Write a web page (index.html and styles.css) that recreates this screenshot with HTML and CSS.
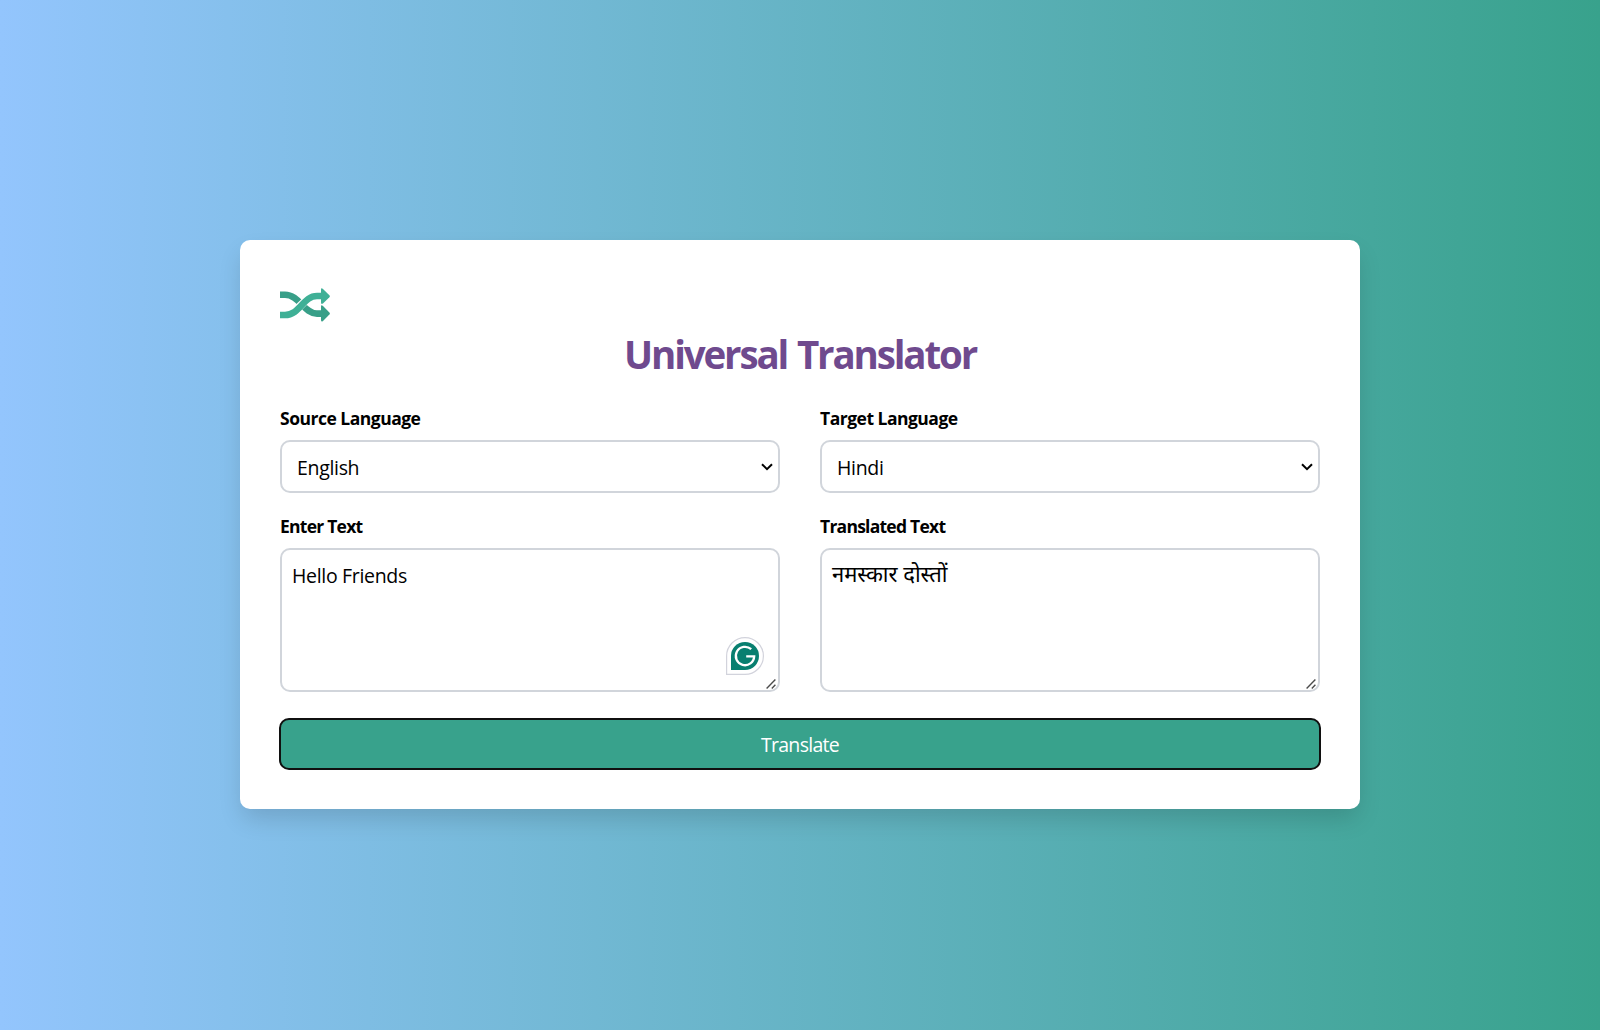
FILE: index.html
```html
<!DOCTYPE html>
<html lang="en">
<head>
<meta charset="utf-8">
<title>Universal Translator</title>
<link rel="stylesheet" href="styles.css">
</head>
<body>
<main class="card">
  <svg class="logo" viewBox="0 0 50 34" aria-hidden="true">
    <path class="strand-back" d="M0 6.8H5C19 6.8 24 25.6 37 25.6H42"/>
    <path class="head-back" d="M41 18.5Q41 16.5 43 18L49.4 24.6Q50.3 25.6 49.4 26.6L43 33Q41 34.4 41 32.1Z"/>
    <path class="strand-gap" d="M13 24.5C20 20 24 11.5 32 9"/>
    <path class="strand-front" d="M0 27H5C20 27 23 8 37 8H42"/>
    <path class="head-front" d="M41 1.5Q41-.5 43 .9L49.4 7.3Q50.3 8.3 49.4 9.3L43 15.5Q41 16.8 41 14.5Z"/>
  </svg>
  <h1 class="title">Universal Translator</h1>
  <form class="form">
    <div class="field">
      <label class="label" for="source">Source Language</label>
      <div class="control">
        <select class="select" id="source"><option>English</option></select>
        <svg class="chevron" viewBox="0 0 12 8" aria-hidden="true"><path d="M1 1.2 6 6.2 11 1.2"/></svg>
      </div>
    </div>
    <div class="field">
      <label class="label" for="target">Target Language</label>
      <div class="control">
        <select class="select" id="target"><option>Hindi</option></select>
        <svg class="chevron" viewBox="0 0 12 8" aria-hidden="true"><path d="M1 1.2 6 6.2 11 1.2"/></svg>
      </div>
    </div>
    <div class="field">
      <label class="label label-text" for="input">Enter Text</label>
      <div class="control">
        <textarea class="textarea" id="input" spellcheck="false">Hello Friends</textarea>
        <svg class="assistant" viewBox="0 0 38 38" aria-hidden="true">
          <path class="assistant-frame" d="M.6 37.4V19A18.4 18.4 0 1 1 19 37.4Z"/>
          <path class="assistant-fill" d="M5 33V19A14 14 0 1 1 19 33Z"/>
          <path class="assistant-mark" d="M25.2 12.2A9.2 9.2 0 1 0 28.2 19.3H20.2"/>
        </svg>
        <svg class="grip" viewBox="0 0 10 10" aria-hidden="true"><path d="M.6 9.4 9.4.6M5.8 9.4 9.4 5.8"/></svg>
      </div>
    </div>
    <div class="field">
      <label class="label label-text" for="output">Translated Text</label>
      <div class="control">
        <textarea class="textarea textarea-hindi" id="output" spellcheck="false" lang="hi">नमस्कार दोस्तों</textarea>
        <svg class="grip" viewBox="0 0 10 10" aria-hidden="true"><path d="M.6 9.4 9.4.6M5.8 9.4 9.4 5.8"/></svg>
      </div>
    </div>
    <button class="button" type="button">Translate</button>
  </form>
</main>
</body>
</html>
```
FILE: styles.css
```css
* {
  box-sizing: border-box;
}

body {
  margin: 0;
  min-height: 100vh;
  padding-top: 240px;
  background: linear-gradient(to right, #93c5fd, #38a28c);
  font-family: "Open Sans", "Noto Sans", sans-serif;
  color: #000;
}

.card {
  width: 1120px;
  height: 569px;
  margin: 0 auto;
  padding: 48px 40px 40px;
  border-radius: 10px;
  background: #fff;
  box-shadow: 0 12px 24px -3px rgba(0, 0, 0, .15);
}

.logo {
  display: block;
  width: 50px;
  height: 34px;
}

.strand-back,
.strand-front,
.strand-gap {
  fill: none;
  stroke-width: 6.6;
}

.strand-back { stroke: #389f88; }
.strand-front { stroke: #3fb096; }
.strand-gap { stroke: #fff; stroke-width: 8; }
.head-back { fill: #389f88; }
.head-front { fill: #3fb096; }

.title {
  margin: 7px 0 0;
  font-size: 38.5px;
  line-height: 50px;
  font-weight: 700;
  letter-spacing: -2.15px;
  word-spacing: 2px;
  text-align: center;
  color: #6f4a8e;
}

.form {
  display: grid;
  grid-template-columns: 1fr 1fr;
  column-gap: 40px;
  margin-top: 25px;
}

.field {
  display: flex;
  flex-direction: column;
  margin-bottom: 19px;
}

.label {
  margin-bottom: 8px;
  font-size: 17.5px;
  line-height: 28px;
  font-weight: 700;
  letter-spacing: -.5px;
}

.label-text {
  letter-spacing: -.75px;
}

.control {
  position: relative;
  display: flex;
}

.select,
.textarea {
  width: 100%;
  margin: 0;
  border: 2px solid #d1d5db;
  border-radius: 10px;
  background: #fff;
  color: #000;
  font-family: inherit;
  font-size: 19.5px;
  letter-spacing: -.32px;
}

.select {
  appearance: none;
  height: 53px;
  padding: 2px 15px 0;
}

.textarea {
  display: block;
  height: 144px;
  padding: 12px 10px;
  line-height: 28px;
  resize: none;
  overflow: hidden;
}

.textarea-hindi {
  padding-top: 9px;
  font-size: 22px;
  letter-spacing: normal;
}

.chevron {
  position: absolute;
  right: 7px;
  top: 23px;
  width: 12px;
  height: 8px;
  fill: none;
  stroke: #000;
  stroke-width: 2;
}

.grip {
  position: absolute;
  right: 4px;
  bottom: 3px;
  width: 10px;
  height: 10px;
  fill: none;
  stroke: #4b4b4b;
  stroke-width: 1.4;
}

.assistant {
  position: absolute;
  left: 446px;
  top: 89px;
  width: 38px;
  height: 38px;
}

.assistant-frame { fill: #fff; stroke: #d2d3dc; stroke-width: 1.2; }
.assistant-fill { fill: #087f70; }
.assistant-mark { fill: none; stroke: #fff; stroke-width: 2.3; }

.button {
  grid-column: 1 / -1;
  height: 50px;
  margin-top: 8px;
  padding: 0;
  border: 0;
  border-radius: 9px;
  outline: 2px solid #101010;
  outline-offset: -1px;
  background: #38a28c;
  color: #fff;
  font-family: inherit;
  font-size: 19.5px;
  letter-spacing: -.7px;
}
```
